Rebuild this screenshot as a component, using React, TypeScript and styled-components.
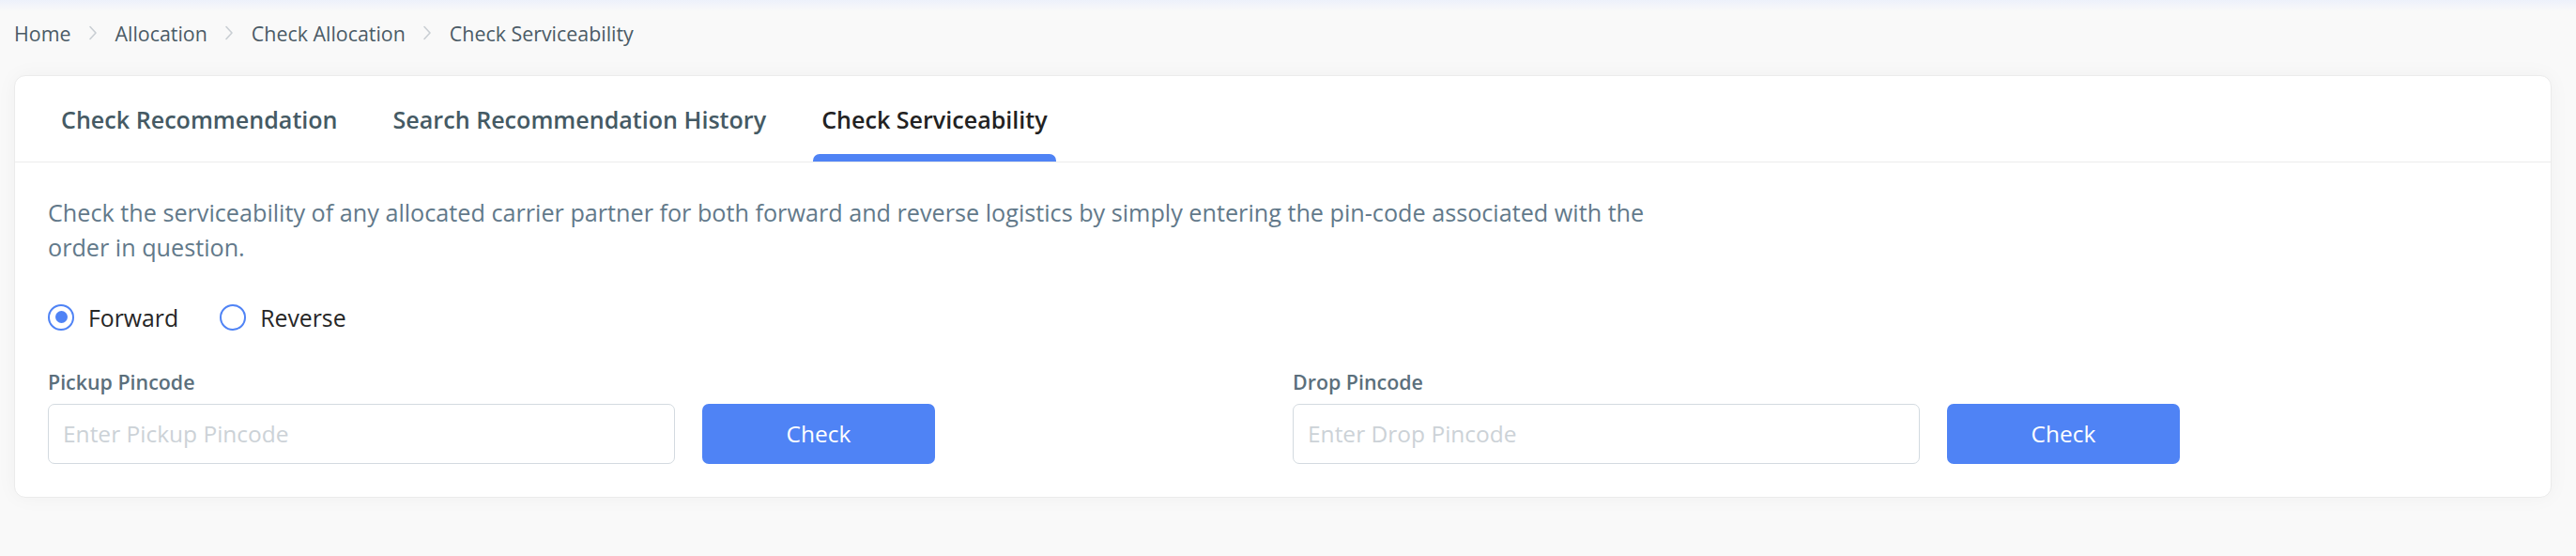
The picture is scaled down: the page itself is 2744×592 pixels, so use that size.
import React, { useState } from "react";
import styled, { createGlobalStyle } from "styled-components";

const GlobalStyle = createGlobalStyle`
  html, body {
    margin: 0;
    padding: 0;
    background: #f9f9f9;
    font-family: "Open Sans", "Noto Sans", sans-serif;
  }
  * {
    box-sizing: border-box;
  }
`;

const Page = styled.div`
  min-height: 592px;
  padding: 0 26px 0 15px;
  background: linear-gradient(#edf1fb 0px, #f9f9f9 12px);
`;

const Breadcrumb = styled.nav`
  height: 70px;
  display: flex;
  align-items: center;
`;

const Crumb = styled.span`
  font-size: 21.4px;
  color: #4b5b66;
  white-space: nowrap;
`;

const Separator = styled.span`
  width: 47px;
  display: flex;
  justify-content: center;
  align-items: center;
`;

const Card = styled.section`
  margin-top: 10px;
  background: #ffffff;
  border: 1px solid #ebebeb;
  border-radius: 12px;
  box-shadow: 0 0 22px rgba(0, 0, 0, 0.04);
`;

const TabBar = styled.div`
  height: 92px;
  display: flex;
  gap: 41px;
  padding-left: 40px;
  border-bottom: 1px solid #ececec;
`;

const Tab = styled.button<{ $active?: boolean }>`
  position: relative;
  height: 100%;
  display: flex;
  align-items: center;
  padding: 0 9px;
  border: none;
  background: none;
  cursor: pointer;
  font-family: inherit;
  font-size: 25.1px;
  font-weight: 600;
  color: ${({ $active }) => ($active ? "#222222" : "#455a64")};

  &::after {
    content: "";
    display: ${({ $active }) => ($active ? "block" : "none")};
    position: absolute;
    left: 0;
    right: 0;
    bottom: 0;
    height: 8px;
    background: #4f83f5;
    border-radius: 7px 7px 0 0;
  }
`;

const Body = styled.div`
  padding: 35px;
`;

const Description = styled.p`
  margin: 0;
  max-width: 1750px;
  font-size: 25.2px;
  line-height: 36.75px;
  color: #62798a;
`;

const RadioGroup = styled.div`
  margin-top: 42px;
  display: flex;
  align-items: center;
  gap: 44px;
`;

const RadioLabel = styled.label`
  display: flex;
  align-items: center;
  gap: 15px;
  cursor: pointer;
  font-size: 24.8px;
  color: #262626;
  height: 28px;
`;

const RadioCircle = styled.span<{ $checked?: boolean }>`
  width: 28px;
  height: 28px;
  border-radius: 50%;
  border: 2px solid #4f83f5;
  display: flex;
  align-items: center;
  justify-content: center;

  &::after {
    content: "";
    width: 13px;
    height: 13px;
    border-radius: 50%;
    background: #4f83f5;
    display: ${({ $checked }) => ($checked ? "block" : "none")};
  }
`;

const Fields = styled.div`
  margin-top: 40px;
  display: grid;
  grid-template-columns: 1fr 1fr;
  column-gap: 21px;
`;

const Field = styled.div`
  display: flex;
  flex-direction: column;
`;

const FieldLabel = styled.label`
  font-size: 21.4px;
  font-weight: 600;
  color: #5b6f7c;
  margin-bottom: 9px;
`;

const FieldRow = styled.div`
  display: flex;
  gap: 29px;
`;

const Input = styled.input`
  width: 668px;
  height: 64px;
  padding: 0 15px;
  border: 1.5px solid #d3dae0;
  border-radius: 7px;
  font-family: inherit;
  font-size: 24.5px;
  color: #262626;
  outline: none;

  &::placeholder {
    color: #ccd2d7;
  }
`;

const CheckButton = styled.button`
  width: 248px;
  height: 64px;
  border: none;
  border-radius: 7px;
  background: #4f83f5;
  color: #ffffff;
  font-family: inherit;
  font-size: 24.5px;
  font-weight: 500;
  cursor: pointer;
`;

const Chevron = () => (
  <svg width="10" height="16" viewBox="0 0 10 16" fill="none">
    <path d="M2 1.5 L8 8 L2 14.5" stroke="#c9ced3" strokeWidth="1.6" strokeLinecap="round" strokeLinejoin="round" />
  </svg>
);

const crumbs = ["Home", "Allocation", "Check Allocation", "Check Serviceability"];
const tabs = ["Check Recommendation", "Search Recommendation History", "Check Serviceability"];

export default function App() {
  const [activeTab, setActiveTab] = useState(2);
  const [direction, setDirection] = useState<"forward" | "reverse">("forward");

  return (
    <>
      <GlobalStyle />
      <Page>
        <Breadcrumb>
          {crumbs.map((c, i) => (
            <React.Fragment key={c}>
              {i > 0 && (
                <Separator>
                  <Chevron />
                </Separator>
              )}
              <Crumb>{c}</Crumb>
            </React.Fragment>
          ))}
        </Breadcrumb>

        <Card>
          <TabBar>
            {tabs.map((t, i) => (
              <Tab key={t} $active={i === activeTab} onClick={() => setActiveTab(i)}>
                {t}
              </Tab>
            ))}
          </TabBar>

          <Body>
            <Description>
              Check the serviceability of any allocated carrier partner for both forward and reverse logistics by
              simply entering the pin-code associated with the order in question.
            </Description>

            <RadioGroup>
              <RadioLabel onClick={() => setDirection("forward")}>
                <RadioCircle $checked={direction === "forward"} />
                Forward
              </RadioLabel>
              <RadioLabel onClick={() => setDirection("reverse")}>
                <RadioCircle $checked={direction === "reverse"} />
                Reverse
              </RadioLabel>
            </RadioGroup>

            <Fields>
              <Field>
                <FieldLabel>Pickup Pincode</FieldLabel>
                <FieldRow>
                  <Input placeholder="Enter Pickup Pincode" />
                  <CheckButton>Check</CheckButton>
                </FieldRow>
              </Field>
              <Field>
                <FieldLabel>Drop Pincode</FieldLabel>
                <FieldRow>
                  <Input placeholder="Enter Drop Pincode" />
                  <CheckButton>Check</CheckButton>
                </FieldRow>
              </Field>
            </Fields>
          </Body>
        </Card>
      </Page>
    </>
  );
}
